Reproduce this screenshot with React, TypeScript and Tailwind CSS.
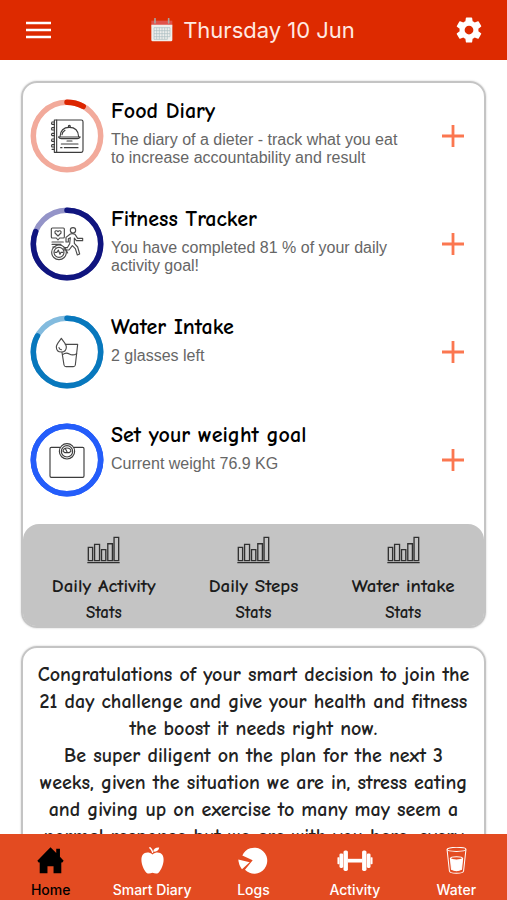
import { useState } from 'react';
import type { ReactNode } from 'react';
import { IoSettingsSharp } from 'react-icons/io5';

function FoodIcon() {
    return (
        <svg viewBox="84 109 114 114" className="h-[38px] w-[38px]" fill="none" stroke="#3c3c3c" strokeWidth="3.4" strokeLinecap="round" strokeLinejoin="round">
            <path d="M103 118H184Q189 118 189 123V209Q189 215 184 215H103Z" />
            <path d="M110 118V215" />
            <path d="M103 124H96Q93 128 96 131H103M103 141H96Q93 145 96 148H103M103 158H96Q93 162 96 165H103M103 175H96Q93 179 96 182H103M103 192H96Q93 196 96 199H103M103 206H96" />
            <path d="M116 169H180M120 168C121 149 133 140 148 140S175 149 176 168M135 149Q127 154 126 162" />
            <circle cx="148" cy="137" r="3" />
            <path d="M116 169Q118 174 124 174H172Q178 174 180 169" />
            <path d="M141 181H156M124 190H174M122 201H126M133 201H174" />
        </svg>
    );
}

function FitnessIcon() {
    return (
        <svg viewBox="84 89 114 114" className="h-[38px] w-[38px]" fill="none" stroke="#4a4a4a" strokeWidth="3.4" strokeLinecap="round" strokeLinejoin="round">
            <path d="M97 98H130Q133 98 133 101V125Q133 128 130 128H119L114 134L109 128H97Q94 128 94 125V101Q94 98 97 98Z" />
            <path d="M114 122L105 113C103 106 111 104 114 109C117 104 125 106 123 113Z" />
            <circle cx="159" cy="105" r="8" />
            <path d="M151 116L138 126V140H145V130L151 127L149 145L142 157H132V164H147L157 151L166 160L172 179L179 176L173 155L163 144V128L169 136H188V129H173L165 117Q158 113 151 116Z" />
            <path d="M96 140H130M96 147H123M98 155H108" />
            <circle cx="117" cy="171" r="22" />
            <circle cx="117" cy="171" r="15" />
            <path d="M105 171H111L115 164L120 177L123 171H129" />
            <path d="M136 160L143 173" />
        </svg>
    );
}

function GlassDropIcon() {
    return (
        <svg viewBox="84 81 114 114" className="h-[38px] w-[38px]" fill="none" stroke="#4a4a4a" strokeWidth="3.4" strokeLinecap="round" strokeLinejoin="round">
            <path d="M124 97C118 106 109 114 109 123C109 132 115 138 124 138S139 132 139 123C139 114 130 106 124 97Z" />
            <path d="M136 115H173L166 177Q165 182 160 182H138Q133 182 132 177L126 139" />
            <path d="M128 146Q138 138 148 144T170 143" />
            <path d="M117 125Q118 131 124 131" />
        </svg>
    );
}

function ScaleIcon() {
    return (
        <svg viewBox="84 75 114 114" className="h-[38px] w-[38px]" fill="none" stroke="#3c3c3c" strokeWidth="3.4" strokeLinecap="round" strokeLinejoin="round">
            <path d="M119 94H94Q90 94 90 98V180Q90 184 94 184H188Q192 184 192 180V98Q192 94 188 94H163" />
            <circle cx="141" cy="106" r="23" />
            <circle cx="141" cy="106" r="17" />
            <path d="M129 106Q130 96 141 96T153 106L147 110H135ZM141 107L137 100" />
        </svg>
    );
}

function StatsIcon() {
    return (
        <svg viewBox="0 0 100 84" className="h-7 w-[33px]" fill="none" stroke="#303030" strokeWidth="4">
            <path d="M4 74V34H17V74ZM23 74V25H38V74ZM44 74V41H57V74ZM63 74V23H77V74ZM82 74V4H96V74ZM1 80H99" />
        </svg>
    );
}

function CalendarIcon() {
    return (
        <svg viewBox="0 0 66 72" className="h-6 w-[22px]">
            <path d="M1 8H64V27H1Z" fill="#e0524a" />
            <path d="M1 20H64V66Q64 70 60 70H5Q1 70 1 66Z" fill="#eeeeec" />
            <path d="M9 29H57M9 38H57M9 47H57M9 56H57M9 64H49M9 29V64M17 29V64M25 29V64M33 29V64M41 29V64M49 29V64M57 29V56" stroke="#a9bcc0" strokeWidth="2" />
            <path d="M12 2V15M53 2V15" stroke="#a9a3a0" strokeWidth="5" strokeLinecap="round" />
        </svg>
    );
}

function HomeIcon() {
    return (
        <svg viewBox="0 0 80 80" className="h-[27px] w-[27px]" fill="currentColor">
            <path d="M40 1L57 18V5H68V29L79 41L75 46H72V78H49V57H31V78H8V46H5L1 41Z" />
        </svg>
    );
}

function AppleIcon() {
    return (
        <svg viewBox="0 0 80 80" className="h-[27px] w-[27px]" fill="currentColor">
            <path d="M40 22C49 15 62 14 69 23C78 36 70 64 58 76C52 81 46 78 40 76C34 78 28 81 22 76C10 64 2 36 11 23C18 14 31 15 40 22Z" />
            <path d="M39 18C37 10 33 5 29 2L33 0C39 5 42 11 42 18Z" />
            <path d="M42 14C43 5 51 1 60 2C58 11 51 15 42 14Z" />
        </svg>
    );
}

function PieIcon() {
    return (
        <svg viewBox="0 0 90 80" className="h-[27px] w-[30px]" fill="currentColor">
            <path d="M44 39L13 25A39 39 0 1 1 21 68Z" />
            <path d="M1 37L35 45L12 66Q2 54 1 37Z" />
        </svg>
    );
}

function DumbbellIcon() {
    return (
        <svg viewBox="0 0 106 80" className="h-[27px] w-9" fill="currentColor">
            <path d="M31 35H75V46H31Z" />
            <rect x="19" y="10" width="13" height="61" rx="5" />
            <rect x="74" y="10" width="13" height="61" rx="5" />
            <rect x="7" y="19" width="11" height="43" rx="4" />
            <rect x="88" y="19" width="11" height="43" rx="4" />
            <rect x="1" y="30" width="6" height="21" rx="2" />
            <rect x="99" y="30" width="6" height="21" rx="2" />
        </svg>
    );
}

function WaterIcon() {
    return (
        <svg viewBox="0 0 80 80" className="h-[27px] w-[27px]" fill="none" stroke="currentColor" strokeWidth="3">
            <ellipse cx="40" cy="7" rx="28" ry="6" />
            <path d="M12 7L19 71Q20 78 40 78T61 71L68 7" />
            <path d="M22 35Q40 44 58 35L55 66Q40 74 25 66Z" fill="currentColor" />
            <ellipse cx="40" cy="34" rx="18" ry="5" />
        </svg>
    );
}

type Goal = {
    title: string;
    text: string;
    icon: ReactNode;
    color: string;
    track: string;
    progress: number;
};

const goals: Goal[] = [
    {
        title: 'Food Diary',
        text: 'The diary of a dieter - track what you eat to increase accountability and result',
        icon: <FoodIcon />,
        color: '#dc2500',
        track: '#f2aa9b',
        progress: 8,
    },
    {
        title: 'Fitness Tracker',
        text: 'You have completed 81 % of your daily activity goal!',
        icon: <FitnessIcon />,
        color: '#10157f',
        track: '#9494c8',
        progress: 81,
    },
    {
        title: 'Water Intake',
        text: '2 glasses left',
        icon: <GlassDropIcon />,
        color: '#0878bd',
        track: '#83bbde',
        progress: 83,
    },
    {
        title: 'Set your weight goal',
        text: 'Current weight 76.9 KG',
        icon: <ScaleIcon />,
        color: '#245dfa',
        track: '#245dfa',
        progress: 100,
    },
];

const stats = ['Daily Activity', 'Daily Steps', 'Water intake'];

const tabs = [
    { label: 'Home', icon: <HomeIcon /> },
    { label: 'Smart Diary', icon: <AppleIcon /> },
    { label: 'Logs', icon: <PieIcon /> },
    { label: 'Activity', icon: <DumbbellIcon /> },
    { label: 'Water', icon: <WaterIcon /> },
];

function ProgressRing({ goal }: { goal: Goal }) {
    return (
        <div className="grid shrink-0 place-items-center">
            <svg viewBox="0 0 74 74" className="col-start-1 row-start-1 h-[74px] w-[74px] -rotate-90" fill="none" strokeWidth="5.5">
                <circle cx="37" cy="37" r="33.7" stroke={goal.track} />
                <circle
                    cx="37"
                    cy="37"
                    r="33.7"
                    stroke={goal.color}
                    strokeLinecap="round"
                    pathLength={100}
                    strokeDasharray={`${goal.progress} 100`}
                />
            </svg>
            <div className="col-start-1 row-start-1">{goal.icon}</div>
        </div>
    );
}

function GoalRow({ goal }: { goal: Goal }) {
    return (
        <li className="flex h-[108px] items-start">
            <ProgressRing goal={goal} />
            <div className="min-w-0 flex-1 pl-[7px]">
                <h2 className="font-['Chalkboard_SE','Comic_Neue','Open_Sans',sans-serif] text-[22px] leading-6 font-bold text-black">{goal.title}</h2>
                <p className="mt-2 max-w-[300px] font-['Liberation_Sans',sans-serif] text-base leading-[18px] text-[#666]">{goal.text}</p>
            </div>
            <button aria-label={`Add to ${goal.title}`} className="mt-[26px] mr-[13px] shrink-0 text-[#fb7750]">
                <svg viewBox="0 0 22 22" className="h-[22px] w-[22px]" stroke="currentColor" strokeWidth="2.8">
                    <path d="M11 0V22M0 11H22" />
                </svg>
            </button>
        </li>
    );
}

export default function App() {
    const [active, setActive] = useState('Home');

    return (
        <div className="flex h-dvh flex-col bg-white font-['Inter',sans-serif]">
            <header className="flex h-15 shrink-0 items-center justify-between bg-[#dd2a00] pr-6 pl-[26px] text-white">
                <button aria-label="Menu">
                    <svg viewBox="0 0 25 18" className="h-[18px] w-[25px]" stroke="currentColor" strokeWidth="2.4">
                        <path d="M0 2H25M0 9H25M0 16H25" />
                    </svg>
                </button>
                <button className="flex items-center gap-2.5 text-[22px] text-[#ffe9e2]">
                    <CalendarIcon />
                    Thursday 10 Jun
                </button>
                <button aria-label="Settings">
                    <IoSettingsSharp className="h-7 w-7" />
                </button>
            </header>

            <main className="min-h-0 flex-1 overflow-y-auto px-[21px] pt-[21px] pb-5 [scrollbar-width:none]">
                <section className="rounded-2xl border-2 border-[#c4c4c4] shadow-[0_0_2px_#c4c4c4]">
                    <ul className="-mb-[7px] px-[7px] pt-4">
                        {goals.map((goal) => (
                            <GoalRow key={goal.title} goal={goal} />
                        ))}
                    </ul>
                    <div className="grid h-[102px] grid-cols-3 rounded-t-2xl rounded-b-[13px] bg-[#c4c4c4] px-1.5">
                        {stats.map((name) => (
                            <button key={name} className="flex flex-col items-center pt-3 font-['Chalkboard_SE','Comic_Neue','Open_Sans',sans-serif] font-bold text-[#1c1c1c]">
                                <StatsIcon />
                                <span className="mt-2 text-[19px] leading-7">{name}</span>
                                <span className="text-[17px] leading-[26px]">Stats</span>
                            </button>
                        ))}
                    </div>
                </section>

                <section className="mt-[18px] rounded-2xl border-2 border-[#c4c4c4] px-3 py-[13px] text-center font-['Chalkboard_SE','Comic_Neue','Open_Sans',sans-serif] text-[20px] leading-[27px] font-bold whitespace-nowrap text-[#222] shadow-[0_0_2px_#c4c4c4]">
                    <p>
                        Congratulations of your smart decision to join the
                        <br />
                        21 day challenge and give your health and fitness
                        <br />
                        the boost it needs right now.
                    </p>
                    <p>
                        Be super diligent on the plan for the next 3
                        <br />
                        weeks, given the situation we are in, stress eating
                        <br />
                        and giving up on exercise to many may seem a
                        <br />
                        normal response but we are with you here, every
                    </p>
                </section>
            </main>

            <nav className="grid h-[66px] shrink-0 grid-cols-5 bg-[#e34b21]">
                {tabs.map((tab) => (
                    <button
                        key={tab.label}
                        onClick={() => setActive(tab.label)}
                        className={`flex flex-col items-center pt-[13px] ${active === tab.label ? 'text-black' : 'text-white'}`}
                    >
                        {tab.icon}
                        <span className="mt-2 text-[14px] leading-4 font-medium">{tab.label}</span>
                    </button>
                ))}
            </nav>
        </div>
    );
}
